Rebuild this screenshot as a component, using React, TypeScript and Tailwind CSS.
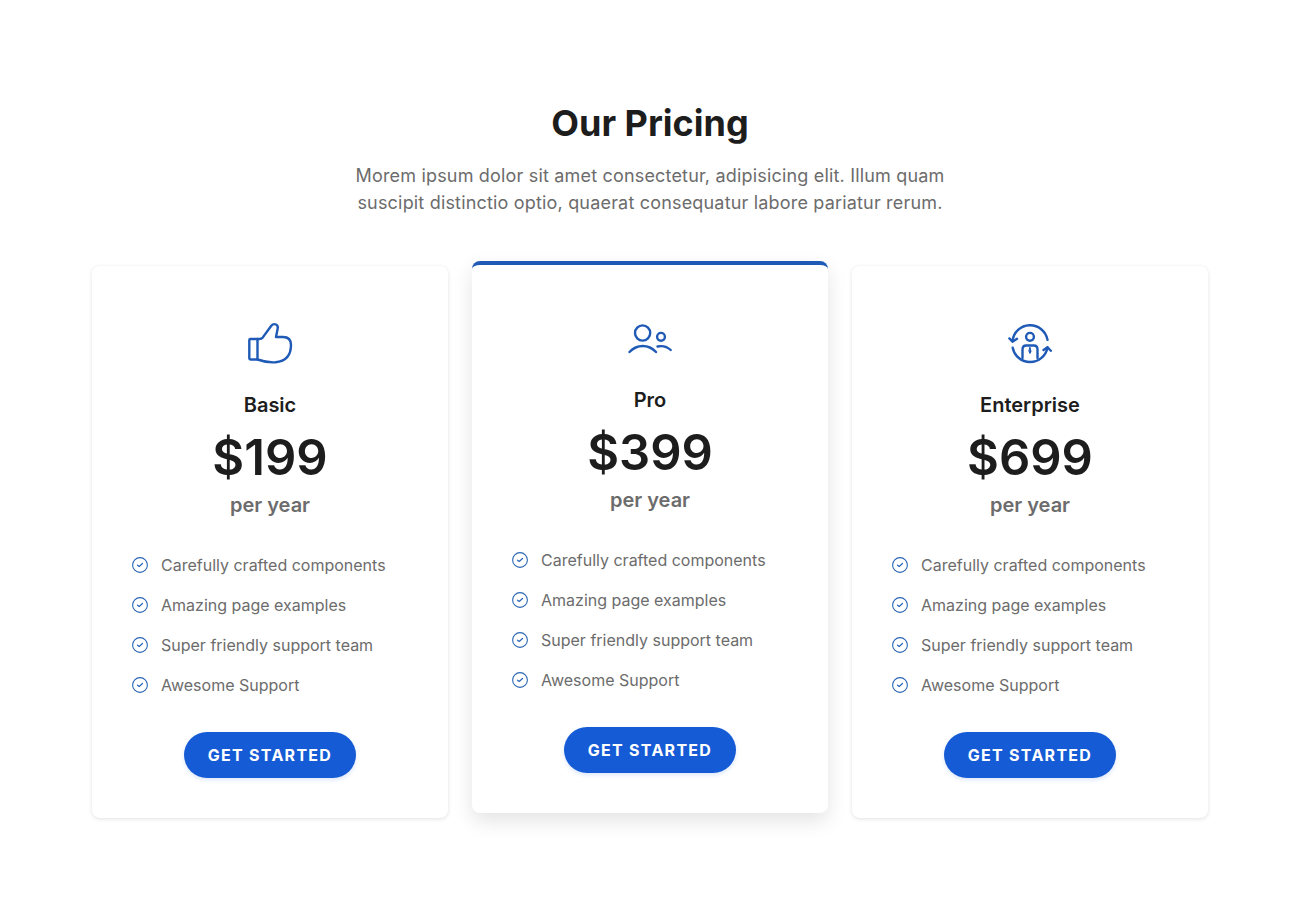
import type { ReactNode } from "react";

const features = [
    "Carefully crafted components",
    "Amazing page examples",
    "Super friendly support team",
    "Awesome Support",
];

function Icon({ children }: { children: ReactNode }) {
    return (
        <svg
            viewBox="0 0 50 50"
            className="size-[50px] text-[#1f5ab6]"
            fill="none"
            stroke="currentColor"
            strokeWidth="2.4"
            strokeLinecap="round"
            strokeLinejoin="round"
            aria-hidden="true"
        >
            {children}
        </svg>
    );
}

function ThumbIcon() {
    return (
        <Icon>
            <path d="M5.5 21H12.5V41.5H5.5Q4.3 41.5 4.3 40.3V22.2Q4.3 21 5.5 21Z" />
            <path d="M12.5 21H14.5Q16.5 21 17.8 19.4L26.3 7.8Q28.3 5.3 31 6.5Q33.3 7.6 32.7 10.4L31 19H38C43 19 46 21.5 46 27C46 38 40.5 43.3 30.5 44.3C24 44.8 18.5 43.6 12.5 41.5" />
        </Icon>
    );
}

function PeopleIcon() {
    return (
        <Icon>
            <circle cx="17.6" cy="20" r="7.6" />
            <circle cx="36" cy="23.8" r="3.9" />
            <path d="M4.5 39C12 31 23.5 31 31 39" />
            <path d="M32.5 33.5C37.5 32.4 42 33.5 45.7 37" />
        </Icon>
    );
}

function CycleIcon() {
    return (
        <Icon>
            <path d="M7.5 23A17.7 17.7 0 0 1 42.5 21.8" />
            <path d="M7.7 29.7A17.7 17.7 0 0 0 42.5 29.5" />
            <path d="M4.4 20.4L7.5 23.7L12 20.8" />
            <path d="M38.5 32L42.5 29.3L45.8 32.8" />
            <circle cx="25" cy="18.8" r="3.9" />
            <path d="M17.5 40V31.5Q17.5 27.5 21.2 27.5H28.8Q32.5 27.5 32.5 31.5V40" />
            <path d="M25 29.5L26 33.3L25 35.5L24 33.3Z" fill="currentColor" strokeWidth="1" />
        </Icon>
    );
}

function CheckIcon() {
    return (
        <svg
            viewBox="0 0 16 16"
            className="size-4 shrink-0 text-[#2a66b5]"
            fill="none"
            stroke="currentColor"
            strokeLinecap="round"
            strokeLinejoin="round"
            aria-hidden="true"
        >
            <circle cx="8" cy="8" r="7.4" strokeWidth="1.1" />
            <path d="M5.5 8.2L7.2 9.5L10.5 6.5" strokeWidth="1.2" />
        </svg>
    );
}

const plans = [
    { name: "Basic", price: "$199", icon: <ThumbIcon />, popular: false },
    { name: "Pro", price: "$399", icon: <PeopleIcon />, popular: true },
    { name: "Enterprise", price: "$699", icon: <CycleIcon />, popular: false },
];

export default function App() {
    return (
        <main className="min-h-screen bg-white px-5 py-[100px] font-['Inter',sans-serif] text-[#1d1d1d]">
            <section className="mx-auto max-w-[1116px]">
                <div className="mx-auto mb-[50px] max-w-[600px] text-center">
                    <h2 className="mb-4 text-4xl leading-[46px] font-bold">Our Pricing</h2>
                    <p className="text-lg leading-[27px] tracking-[0.01em] text-[#6c6c6c]">
                        Morem ipsum dolor sit amet consectetur, adipisicing elit. Illum quam suscipit
                        distinctio optio, quaerat consequatur labore pariatur rerum.
                    </p>
                </div>
                <div className="grid gap-6 md:grid-cols-3">
                    {plans.map((plan) => (
                        <article
                            key={plan.name}
                            className={`flex flex-col items-center rounded-lg border-t-4 bg-white px-10 pt-12 pb-10 ${
                                plan.popular
                                    ? "-translate-y-[5px] border-[#1f5ab6] shadow-[0_8px_20px_rgba(0,0,0,0.11)]"
                                    : "border-transparent shadow-[0_1px_4px_rgba(0,0,0,0.12)]"
                            }`}
                        >
                            {plan.icon}
                            <h3 className="mt-[22px] text-xl leading-[30px] font-semibold">{plan.name}</h3>
                            <p className="mt-2 text-[49px] leading-[60px] font-semibold">{plan.price}</p>
                            <p className="mt-0.5 text-xl leading-[30px] font-semibold text-[#6c6c6c]">per year</p>
                            <ul className="mt-8 flex flex-col gap-3.5 self-stretch">
                                {features.map((feature) => (
                                    <li
                                        key={feature}
                                        className="flex items-center gap-[13px] text-base leading-[26px] text-[#6c6c6c]"
                                    >
                                        <CheckIcon />
                                        {feature}
                                    </li>
                                ))}
                            </ul>
                            <button
                                type="button"
                                className="mt-[34px] rounded-full bg-[#155bd5] px-6 py-[11px] text-base leading-6 font-bold tracking-[0.08em] text-white uppercase shadow-[0_2px_4px_rgba(21,91,213,0.15)] hover:bg-[#124fb9]"
                            >
                                Get Started
                            </button>
                        </article>
                    ))}
                </div>
            </section>
        </main>
    );
}
